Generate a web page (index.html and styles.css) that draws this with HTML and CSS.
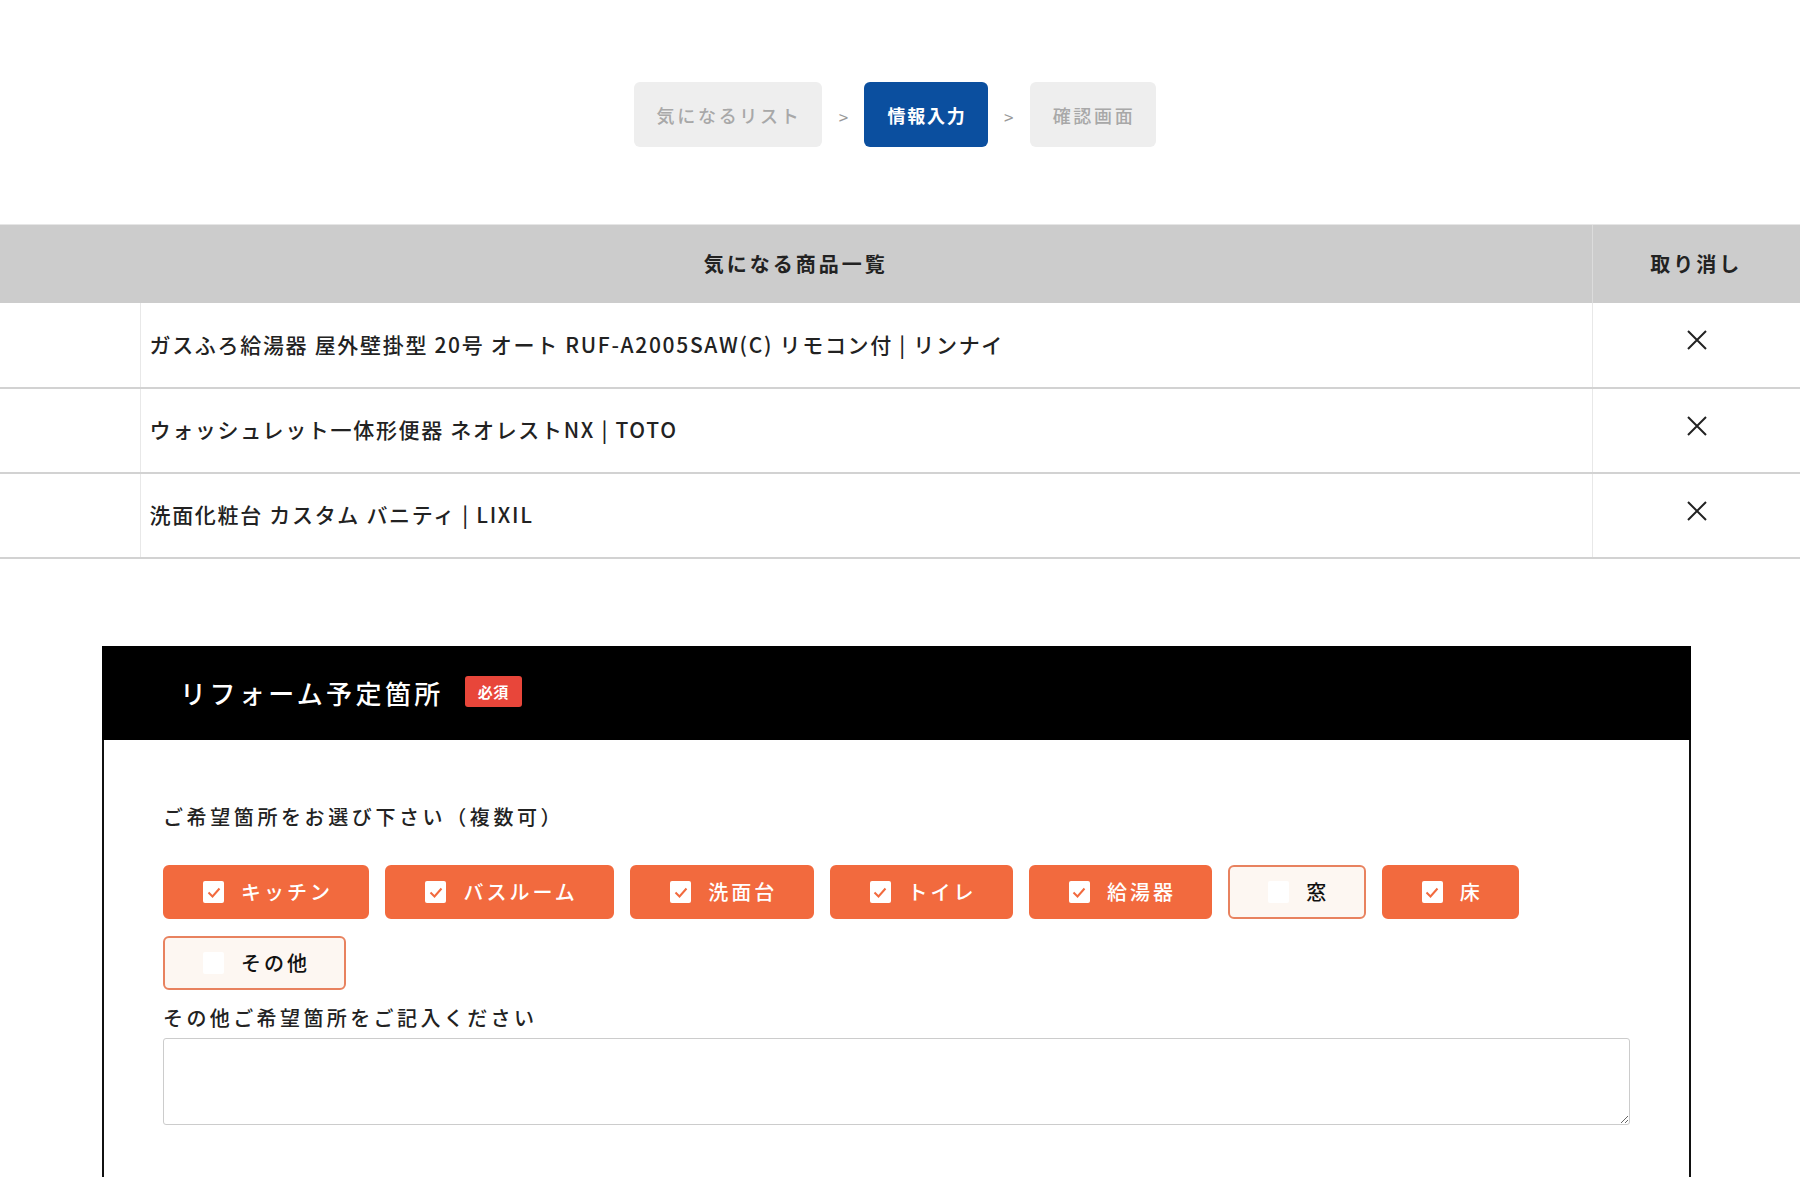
FILE: index.html
```html
<!DOCTYPE html>
<html lang="ja">
<head>
<meta charset="utf-8">
<title>情報入力</title>
<link rel="stylesheet" href="styles.css">
</head>
<body>
<div class="page">
  <nav class="steps">
    <span class="step">気になるリスト</span>
    <span class="sep">&gt;</span>
    <span class="step step-active">情報入力</span>
    <span class="sep">&gt;</span>
    <span class="step">確認画面</span>
  </nav>

  <table class="items">
    <colgroup>
      <col class="col-img">
      <col class="col-name">
      <col class="col-cancel">
    </colgroup>
    <thead>
      <tr>
        <th colspan="2" class="th-name">気になる商品一覧</th>
        <th class="th-cancel">取り消し</th>
      </tr>
    </thead>
    <tbody>
      <tr>
        <td class="c-img"></td>
        <td class="c-name">ガスふろ給湯器 屋外壁掛型 20号 オート RUF-A2005SAW(C) リモコン付 | リンナイ</td>
        <td class="c-cancel"><svg class="x" viewBox="0 0 20 20"><path d="M1 1L19 19M19 1L1 19"/></svg></td>
      </tr>
      <tr>
        <td class="c-img"></td>
        <td class="c-name">ウォッシュレット一体形便器 ネオレストNX | TOTO</td>
        <td class="c-cancel"><svg class="x" viewBox="0 0 20 20"><path d="M1 1L19 19M19 1L1 19"/></svg></td>
      </tr>
      <tr>
        <td class="c-img"></td>
        <td class="c-name">洗面化粧台 カスタム バニティ | LIXIL</td>
        <td class="c-cancel"><svg class="x" viewBox="0 0 20 20"><path d="M1 1L19 19M19 1L1 19"/></svg></td>
      </tr>
    </tbody>
  </table>

  <section class="form-box">
    <header class="form-head">
      <h2 class="form-title">リフォーム予定箇所</h2>
      <span class="badge">必須</span>
    </header>
    <div class="form-body">
      <p class="lead">ご希望箇所をお選び下さい（複数可）</p>
      <div class="choices">
        <label class="choice on"><span class="cb"><svg viewBox="0 0 20 20"><path d="M4.5 10.5L8.5 14.5L15.5 6.5"/></svg></span><span class="ct">キッチン</span></label>
        <label class="choice on"><span class="cb"><svg viewBox="0 0 20 20"><path d="M4.5 10.5L8.5 14.5L15.5 6.5"/></svg></span><span class="ct">バスルーム</span></label>
        <label class="choice on"><span class="cb"><svg viewBox="0 0 20 20"><path d="M4.5 10.5L8.5 14.5L15.5 6.5"/></svg></span><span class="ct">洗面台</span></label>
        <label class="choice on"><span class="cb"><svg viewBox="0 0 20 20"><path d="M4.5 10.5L8.5 14.5L15.5 6.5"/></svg></span><span class="ct">トイレ</span></label>
        <label class="choice on"><span class="cb"><svg viewBox="0 0 20 20"><path d="M4.5 10.5L8.5 14.5L15.5 6.5"/></svg></span><span class="ct">給湯器</span></label>
        <label class="choice"><span class="cb"></span><span class="ct">窓</span></label>
        <label class="choice on"><span class="cb"><svg viewBox="0 0 20 20"><path d="M4.5 10.5L8.5 14.5L15.5 6.5"/></svg></span><span class="ct">床</span></label>
        <label class="choice"><span class="cb"></span><span class="ct">その他</span></label>
      </div>
      <p class="sub">その他ご希望箇所をご記入ください</p>
      <textarea class="ta"></textarea>
    </div>
  </section>
</div>
</body>
</html>
```

FILE: styles.css
```css
* { box-sizing: border-box; }
html, body { margin: 0; padding: 0; background: #fff; }
body {
  font-family: "Noto Sans CJK JP", "Noto Sans", sans-serif;
  color: #222;
}
.page { width: 1800px; }

/* steps */
.steps {
  width: 1790px;
  padding-top: 82px;
  display: flex;
  justify-content: center;
  align-items: center;
}
.step {
  height: 65px;
  padding: 0 21px 0 23px;
  display: flex;
  align-items: center;
  background: #eeeeee;
  color: #a8a8a8;
  font-size: 18px;
  letter-spacing: 0.15em;
  border-radius: 6px;
  font-weight: 500;
}
.step-active {
  background: #0b4f9f;
  color: #fff;
  font-weight: 700;
  letter-spacing: 0.1em;
}
.sep {
  width: 42px;
  text-align: center;
  color: #999;
  font-size: 17px;
  padding-top: 4px;
}

/* table */
.items {
  margin-top: 77px;
  width: 1800px;
  border-collapse: collapse;
  table-layout: fixed;
}
.col-img { width: 140px; }
.col-cancel { width: 208px; }
.items th {
  background: #cccccc;
  height: 78px;
  font-size: 20px;
  font-weight: 700;
  letter-spacing: 0.15em;
  color: #222;
  border-top: 1px solid #e6e6e6;
  padding: 0;
}
.th-name { text-align: center; }
.th-cancel { border-left: 1px solid #dcdcdc; }
.items td {
  height: 85px;
  border-bottom: 2px solid #d2d2d2;
  padding: 0;
  vertical-align: middle;
}
.c-img { border-right: 1px solid #e8e8e8; }
.items td.c-name {
  padding-left: 9px;
  padding-bottom: 2px;
  font-size: 21px;
  font-weight: 500;
  letter-spacing: 0.08em;
  color: #222;
  white-space: nowrap;
}
.items td.c-cancel {
  border-left: 1px solid #e8e8e8;
  padding: 0 0 9px 2px;
}
.x {
  width: 20px; height: 20px;
  display: block;
  margin: 0 auto;
}
.x path { stroke: #222; stroke-width: 2; fill: none; }

/* form box */
.form-box {
  margin-top: 87px;
  margin-left: 102px;
  width: 1589px;
  border-left: 2px solid #111;
  border-right: 2px solid #111;
}
.form-head {
  background: #000;
  height: 94px;
  margin: 0 -2px;
  padding-left: 78px;
  display: flex;
  align-items: center;
}
.form-title {
  margin: 0;
  color: #fff;
  font-size: 26px;
  font-weight: 500;
  letter-spacing: 0.13em;
}
.badge {
  margin-left: 21px;
  background: #e8463a;
  color: #fff;
  font-size: 15px;
  font-weight: 700;
  width: 57px;
  height: 31px;
  border-radius: 3px;
  display: flex;
  align-items: center;
  justify-content: center;
  letter-spacing: 0.02em;
  margin-top: -2px;
}
.form-body {
  padding: 62px 59px 52px 59px;
}
.lead {
  margin: 0;
  font-size: 20px;
  line-height: 30px;
  letter-spacing: 0.18em;
  font-weight: 500;
  color: #222;
}
.choices {
  margin-top: 33px;
  display: flex;
  flex-wrap: wrap;
  gap: 17px 16px;
}
.choice {
  height: 54px;
  padding: 0 34.4px 0 38px;
  display: flex;
  align-items: center;
  border-radius: 6px;
  background: #fdf7f2;
  border: 2px solid #e8825f;
  color: #111;
  font-size: 20px;
  font-weight: 500;
  letter-spacing: 0.15em;
}
.choice.on {
  background: #f26a3e;
  border-color: #f26a3e;
  color: #fff;
}
.cb {
  width: 21px;
  height: 22px;
  background: #fff;
  border-radius: 2px;
  margin-right: 17px;
  display: flex;
  align-items: center;
  justify-content: center;
}
.cb svg { width: 20px; height: 20px; }
.cb path { stroke: #f26a3e; stroke-width: 2; fill: none; }
.sub {
  margin: 13px 0 5px;
  font-size: 20px;
  line-height: 30px;
  letter-spacing: 0.17em;
  font-weight: 500;
  color: #222;
}
.ta {
  display: block;
  width: 100%;
  height: 87px;
  border: 1px solid #cccccc;
  border-radius: 3px;
  font-family: inherit;
  font-size: 18px;
}
```
